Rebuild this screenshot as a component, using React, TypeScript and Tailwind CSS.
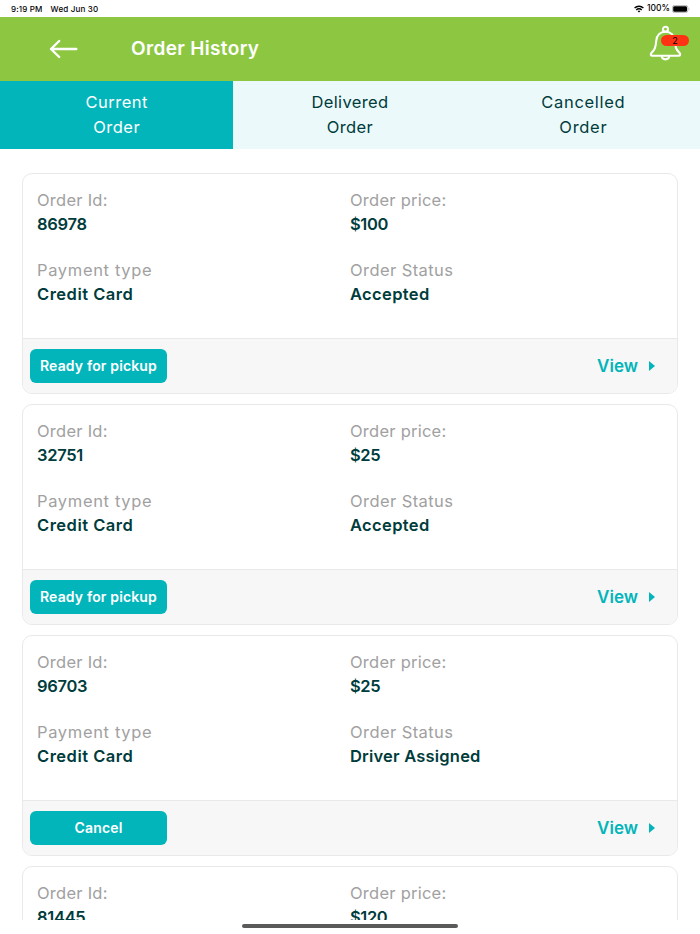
import { useState } from 'react';
import clsx from 'clsx';

type Order = {
  id: string;
  price: string;
  payment: string;
  status: string;
  action: string;
};

const orders: Order[] = [
  { id: '86978', price: '$100', payment: 'Credit Card', status: 'Accepted', action: 'Ready for pickup' },
  { id: '32751', price: '$25', payment: 'Credit Card', status: 'Accepted', action: 'Ready for pickup' },
  { id: '96703', price: '$25', payment: 'Credit Card', status: 'Driver Assigned', action: 'Cancel' },
  { id: '81445', price: '$120', payment: 'Credit Card', status: 'Accepted', action: 'Cancel' },
];

const tabs = [
  { name: 'Current', tracking: 'tracking-[0.5px]' },
  { name: 'Delivered', tracking: 'tracking-[0.35px]' },
  { name: 'Cancelled', tracking: 'tracking-[0.7px]' },
];

function StatusBar() {
  return (
    <div className="flex h-[17px] shrink-0 items-center justify-between bg-white pr-[10px] pl-[11px] text-[8px] font-medium text-black">
      <div className="flex gap-[8px] tracking-[0.17px]">
        <span>9:19 PM</span>
        <span>Wed Jun 30</span>
      </div>
      <div className="flex items-center gap-[3px]">
        <svg width="10" height="8" viewBox="0 0 10 8" fill="none" stroke="#000" strokeWidth="1.4">
          <path d="M0.6 3.1a6.2 6.2 0 0 1 8.8 0" />
          <path d="M2.3 4.9a3.8 3.8 0 0 1 5.4 0" />
          <path d="M5 7.6 3.7 6.3a1.8 1.8 0 0 1 2.6 0z" fill="#000" stroke="none" />
        </svg>
        <span className="-mr-px text-[8.5px]">100%</span>
        <svg width="18" height="8" viewBox="0 0 18 8">
          <rect x="0.4" y="0.4" width="15.4" height="7.2" rx="2.2" fill="#fff" stroke="#a6a6a6" strokeWidth="0.8" />
          <rect x="1.2" y="1.2" width="13.8" height="5.6" rx="1.4" fill="#000" />
          <path d="M16.7 2.7c.9.3.9 2.3 0 2.6z" fill="#a6a6a6" />
        </svg>
      </div>
    </div>
  );
}

function Header() {
  return (
    <header className="flex h-16 shrink-0 items-center bg-[#8dc742] pr-[18px] pl-[49px]">
      <button aria-label="Back">
        <svg width="29" height="20" viewBox="0 0 29 20" fill="none" stroke="#fff" strokeWidth="2.4" strokeLinecap="round" strokeLinejoin="round">
          <path d="M27.3 10H2M10.2 2 2 10l8.2 8" />
        </svg>
      </button>
      <h1 className="ml-[53px] pt-px text-[19px] font-semibold tracking-[0.35px] text-white">Order History</h1>
      <button className="relative mb-3 ml-auto" aria-label="Notifications">
        <svg width="33" height="36" viewBox="0 0 33 36" fill="none" stroke="#fff" strokeWidth="2.1" strokeLinecap="round" strokeLinejoin="round">
          <circle cx="16.5" cy="4.2" r="2.5" />
          <path d="M16.5 6.7c-5.6 0-8.7 4-9.2 8.8-.3 3.2-.5 5.3-1.4 7.7-.8 2.2-2.3 3.4-3.5 4.8-1 1.3-.7 2.7 1 2.7h26.2c1.7 0 2-1.4 1-2.7-1.2-1.4-2.7-2.6-3.5-4.8-.9-2.4-1.1-4.5-1.4-7.7-.5-4.8-3.6-8.8-9.2-8.8z" />
          <path d="M12.8 31c.2 4.5 7.2 4.5 7.4 0" />
        </svg>
        <span className="absolute top-[10px] left-[12px] flex h-[11px] w-7 items-center justify-center rounded-full bg-[#ff3214] text-[9px] text-black">
          2
        </span>
      </button>
    </header>
  );
}

type FieldProps = {
  label: string;
  value: string;
  labelClass?: string;
  valueClass?: string;
};

function Field({ label, value, labelClass, valueClass }: FieldProps) {
  return (
    <div className="leading-6">
      <div className={clsx('text-[16.5px] text-[#a1a1a1]', labelClass)}>{label}</div>
      <div className={clsx('text-[16.5px] font-semibold text-[#003c3c]', valueClass)}>{value}</div>
    </div>
  );
}

function OrderCard({ order }: { order: Order }) {
  return (
    <div className="h-[221px] shrink-0 overflow-hidden rounded-[10px] border border-[#e9e9e9] bg-white">
      <div className="grid h-[164px] grid-cols-[313px_1fr] content-start gap-y-[22px] pt-[13.5px] pl-[14px]">
        <Field label="Order Id:" value={order.id} labelClass="tracking-[0.25px]" valueClass="tracking-[-0.3px]" />
        <Field label="Order price:" value={order.price} labelClass="tracking-[0.25px]" valueClass="tracking-[-0.4px]" />
        <Field label="Payment type" value={order.payment} labelClass="tracking-[0.65px]" valueClass="tracking-[0.5px]" />
        <Field
          label="Order Status"
          value={order.status}
          labelClass="tracking-[0.42px]"
          valueClass={order.status === 'Accepted' ? 'tracking-[0.35px]' : 'tracking-[0.2px]'}
        />
      </div>
      <div className="flex h-[55px] items-center justify-between border-t border-[#e9e9e9] bg-[#f7f7f7] pr-[21px] pl-[7px]">
        <button className="h-[34px] w-[137px] rounded-md bg-[#02b5ba] pb-[2px] text-[14px] font-semibold tracking-[0.15px] whitespace-nowrap text-white">
          {order.action}
        </button>
        <button className="flex items-center gap-[11px] text-[17px] font-semibold text-[#02b5ba]">
          <span className="pt-[2px]">View</span>
          <svg width="7" height="10" viewBox="0 0 7 10" fill="#02b5ba">
            <path d="M0 0 6 5 0 10z" />
          </svg>
        </button>
      </div>
    </div>
  );
}

export default function App() {
  const [activeTab, setActiveTab] = useState('Current');

  return (
    <div className="flex h-[934px] w-[700px] flex-col overflow-hidden bg-white font-['Inter',sans-serif]">
      <StatusBar />
      <Header />

      <nav className="grid h-[68px] shrink-0 grid-cols-3 bg-[#ebf9fa]">
        {tabs.map(tab => (
          <button
            key={tab.name}
            onClick={() => setActiveTab(tab.name)}
            className={clsx(
              'text-[16.5px] leading-[25px]',
              tab.tracking,
              activeTab === tab.name ? 'bg-[#02b5ba] text-white' : 'text-[#003c3c]'
            )}
          >
            {tab.name}
            <br />
            Order
          </button>
        ))}
      </nav>

      {/* Scrollable order list */}
      <main className="flex min-h-0 flex-1 flex-col gap-[10px] overflow-hidden px-[22px] pt-6">
        {orders.map(order => (
          <OrderCard key={order.id} order={order} />
        ))}
      </main>

      {/* Home indicator */}
      <div className="flex h-[14px] shrink-0 justify-center pt-1">
        <div className="h-1 w-[216px] rounded-full bg-[#5a5a5a]" />
      </div>
    </div>
  );
}
